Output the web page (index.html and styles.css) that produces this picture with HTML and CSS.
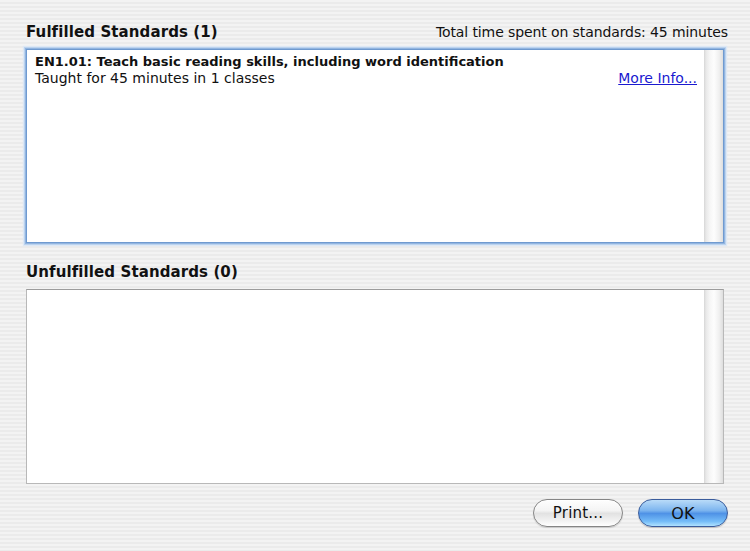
FILE: index.html
```html
<!DOCTYPE html>
<html>
<head>
<meta charset="utf-8">
<link rel="stylesheet" href="styles.css">
</head>
<body>
<div class="dialog">
  <div class="header">
    <div class="title">Fulfilled Standards (1)</div>
    <div class="total">Total time spent on standards: 45 minutes</div>
  </div>
  <div class="list focused">
    <div class="content">
      <div class="item">
        <div class="item-title">EN1.01: Teach basic reading skills, including word identification</div>
        <div class="item-row">
          <span class="item-sub">Taught for 45 minutes in 1 classes</span>
          <a class="more" href="#">More Info...</a>
        </div>
      </div>
    </div>
    <div class="scrolltrack"></div>
  </div>
  <div class="title title-second">Unfulfilled Standards (0)</div>
  <div class="list plain">
    <div class="content"></div>
    <div class="scrolltrack"></div>
  </div>
  <div class="buttons">
    <button class="btn btn-print">Print...</button>
    <button class="btn btn-ok">OK</button>
  </div>
</div>
</body>
</html>
```

FILE: styles.css
```css
html, body {
  margin: 0;
  padding: 0;
}
body {
  width: 750px;
  height: 551px;
  overflow: hidden;
  background: repeating-linear-gradient(to bottom, #f3f3f3 0px, #f3f3f3 2px, #ebebeb 2px, #ebebeb 4px);
  font-family: "DejaVu Sans", "Liberation Sans", sans-serif;
  color: #111;
}
.dialog {
  padding: 23px 26px 0 26px;
  display: flex;
  flex-direction: column;
}
.header {
  display: flex;
  justify-content: space-between;
  align-items: baseline;
  margin-right: -4px;
}
.title {
  font-size: 15px;
  font-weight: bold;
  line-height: 18px;
  letter-spacing: 0.1px;
}
.total {
  font-size: 14px;
  line-height: 18px;
  letter-spacing: -0.1px;
}
.list {
  display: flex;
  background: #fff;
  box-sizing: border-box;
}
.list.focused {
  margin-top: 8px;
  height: 194px;
  border: 1px solid #6f9ad0;
  box-shadow: 0 0 0 1px #92b5e0, 0 0 0 2px #bcd3ee, 0 0 1px 3px #dde8f5;
}
.list.plain {
  margin-top: 8px;
  height: 195px;
  border: 1px solid #b8b8b8;
  border-top-color: #9c9c9c;
}
.content {
  flex: 1;
  padding: 3px 7px 0 8px;
}
.item-title {
  font-size: 13px;
  font-weight: bold;
  line-height: 17px;
}
.item-row {
  display: flex;
  justify-content: space-between;
  align-items: baseline;
}
.item-sub {
  font-size: 14px;
  line-height: 17px;
}
.more {
  font-size: 14px;
  line-height: 17px;
  color: #1a1ad0;
  text-decoration: underline;
}
.scrolltrack {
  width: 19px;
  background: linear-gradient(to right, #d6d6d6 0px, #e8e8e8 2px, #f6f6f6 6px, #fdfdfd 10px, #f0f0f0 15px, #dedede 19px);
}
.title-second {
  margin-top: 20px;
}
.buttons {
  display: flex;
  justify-content: flex-end;
  gap: 15px;
  margin-top: 15px;
  margin-right: -4px;
}
.btn {
  width: 90px;
  height: 28px;
  border-radius: 14px;
  font-family: "DejaVu Sans", "Liberation Sans", sans-serif;
  font-size: 15px;
  letter-spacing: 0.2px;
  color: #111;
  padding: 0;
  cursor: default;
}
.btn-print {
  border: 1px solid #858585;
  background: linear-gradient(to bottom, #fefefe 0%, #f4f4f4 40%, #e2e2e2 52%, #f2f2f2 80%, #ffffff 100%);
  box-shadow: inset 0 1px 1px rgba(255,255,255,0.9), 0 1px 1px rgba(0,0,0,0.15);
}
.btn-ok {
  border: 1px solid #3a5c9c;
  background: linear-gradient(to bottom, #b9dbf8 0%, #7db5ef 40%, #4f92e6 52%, #74bcf8 82%, #b0e2ff 100%);
  box-shadow: 0 1px 1px rgba(0,0,0,0.2);
  font-size: 16px;
}
```
